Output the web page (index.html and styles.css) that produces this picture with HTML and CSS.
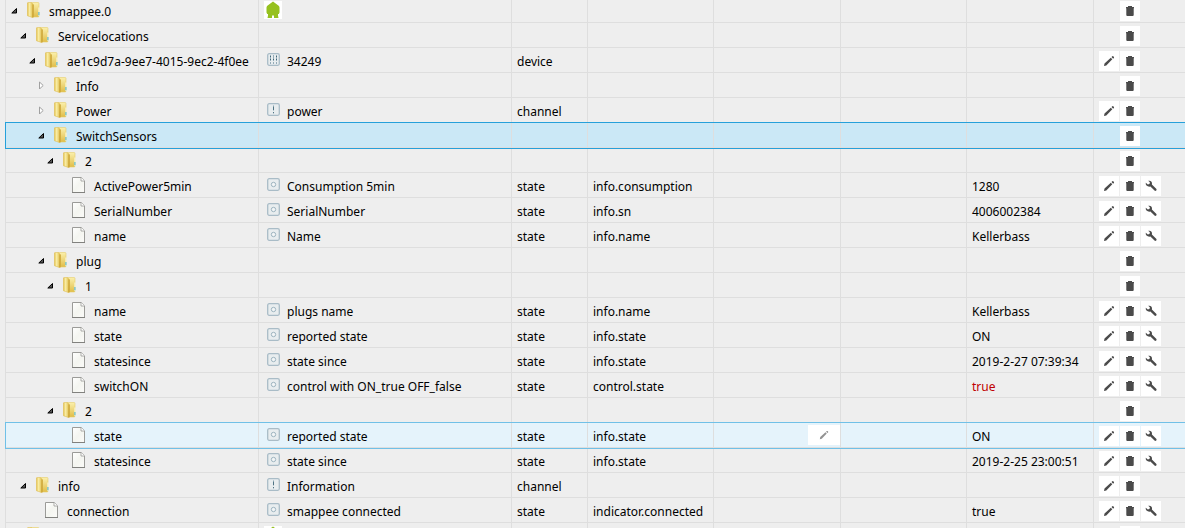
FILE: index.html
```html
<!DOCTYPE html>
<html lang="en">
<head>
<meta charset="utf-8">
<title>Objects</title>
<link rel="stylesheet" href="styles.css">
<script src="objects.js" defer></script>
</head>
<body>
<svg class="sprite" aria-hidden="true">
  <defs>
    <linearGradient id="gold" x1="0" y1="0" x2="1" y2="0">
      <stop offset="0" stop-color="#e3c04a"/><stop offset=".4" stop-color="#f9eda6"/><stop offset="1" stop-color="#dfbd48"/>
    </linearGradient>
    <linearGradient id="gold-back" x1="0" y1="0" x2="0" y2="1">
      <stop offset="0" stop-color="#fbf0ac"/><stop offset="1" stop-color="#e0bd48"/>
    </linearGradient>
    <linearGradient id="paper" x1="0" y1="0" x2="1" y2="1">
      <stop offset="0" stop-color="#ffffff"/><stop offset=".5" stop-color="#f4f5f0"/><stop offset="1" stop-color="#fbfbf9"/>
    </linearGradient>
  </defs>
  <symbol id="open" viewBox="0 0 8 8"><path d="M5.500 2.500v4.500H.8z" fill="#555" stroke="#000"/></symbol>
  <symbol id="closed" viewBox="0 0 8 8"><path d="M1.500 1v7l3.700-3.500z" fill="#fff" stroke="#a0a0a0"/></symbol>
  <symbol id="folder" viewBox="0 0 13 16">
    <path d="M4 .5h7q1 0 1 1v12.500q0 1-1 1H4z" fill="url(#gold-back)" stroke="#e6cc6c" stroke-width=".6"/>
    <path d="M.3 1.500Q.3.500 1.300.5H4L6 2v13.500L1 14q-.7 0-.7-1z" fill="url(#gold)" stroke="#dfc05a" stroke-width=".6"/>
    <path d="M5.500 2.500h1.300v12.800H5z" fill="#cfa93c"/>
    <path d="M11.300 5.500h1.500v8.500h-1.500z" fill="#f8f2d0"/><path d="M11.300 10h1.200v3.200h-1.200z" fill="#62b9cc"/>
  </symbol>
  <symbol id="file" viewBox="0 0 13 16">
    <path d="M.5.500h8.700l3.300 3.300v11.700H.5z" fill="url(#paper)" stroke="#9b9b98"/>
    <path d="M9 .5V4h3.500" fill="#fff" stroke="#9b9b98" stroke-width=".8"/>
    <path d="M0 15.500h13" stroke="#81817e"/>
  </symbol>
  <symbol id="state" viewBox="0 0 13 13"><rect x=".7" y=".7" width="11.600" height="11.600" rx="1.500" fill="#e8edef" stroke="#a9bcc7" stroke-width="1.300"/><circle cx="6.500" cy="6.500" r="2.200" fill="#f2f5f6" stroke="#9db4c0"/></symbol>
  <symbol id="channel" viewBox="0 0 13 13"><rect x=".7" y=".7" width="11.600" height="11.600" rx="1.500" fill="#e8edef" stroke="#a9bcc7" stroke-width="1.300"/><path d="M6.500 2.500v5M6.500 9v1.500" stroke="#839fac"/><path d="M6 4h1v3H6zM6 9h1v1H6z" fill="#4f7383"/></symbol>
  <symbol id="device" viewBox="0 0 13 13"><rect x=".7" y=".7" width="11.600" height="11.600" rx="1.500" fill="#e8edef" stroke="#a9bcc7" stroke-width="1.300"/><path d="M3.500 2v6M6.500 2v6M9.500 2v6M3.500 9v2M6.500 9v2M9.500 9v2" stroke="#94abb7"/><path d="M3 3h1v1H3zM9 3h1v1H9zM6 6h1v1H6zM3 6h1v1H3zM9 6h1v1H9z" fill="#426777"/></symbol>
  <symbol id="home" viewBox="0 0 18 18"><path d="M9 .5l6 4.500.5 1.500v5l-.7 1.500H14v1.500l.5 2.500H10v-2.500H8V17H3.500l.5-2.500V13h-.8l-.7-1.500v-5L3 5z" fill="#96c11f"/></symbol>
  <symbol id="edit" viewBox="0 0 12 12"><path d="M1 11l.5-2.500L7.800 2.800l1.500 1.500L3.300 10.400zM8.500 2.100l.8-.8q.5-.4 1 0l.6.6q.4.5 0 1l-.8.800z" fill="#4b4b4b"/></symbol>
  <symbol id="trash" viewBox="0 0 12 12"><path d="M2 2h2V1h4v1h2v1.200h-.3V10q0 1-1 1H3.300q-1 0-1-1V3.200H2z" fill="#4b4b4b"/></symbol>
  <symbol id="wrench" viewBox="0 0 12 12"><path d="M3.200.8Q5.300.200 6.500 1.800 7.300 3 6.900 4.600l4.300 4.100q.8.900.1 1.700-.9.900-1.800.1L5.400 6.500Q3.100 7 1.500 5.500.400 4.200.8 2.800L2.800 4.400 4.500 3.900 4.900 2.300z" fill="#4b4b4b"/></symbol>
</svg>
<main class="tree">
  <table class="objects" aria-label="Objects">
    <colgroup>
      <col class="col-name"><col class="col-name"><col class="col-type"><col class="col-role"><col class="col-info"><col class="col-role"><col class="col-info"><col class="col-actions">
    </colgroup>
    <tbody id="rows"></tbody>
  </table>
</main>
</body>
</html>
```
FILE: styles.css
```css
* { box-sizing: border-box; }

body {
  margin: 0;
  height: 100vh;
  overflow: hidden;
  background: #eee;
  color: #000;
  font: 12px/20px "Noto Sans", "Open Sans", sans-serif;
}

.sprite { position: absolute; width: 0; height: 0; }

.tree {
  margin: -2px 0 0 5px;
  border-left: 1px solid #dedede;
}

.objects {
  width: 100%;
  table-layout: fixed;
  border-collapse: separate;
  border-spacing: 0;
}

.col-name { width: 253px; }
.col-type { width: 76px; }
.col-role { width: 126px; }
.col-info { width: 127px; }
.col-actions { width: 91px; }

.objects td {
  height: 25px;
  padding: 0 0 0 5px;
  overflow: hidden;
  white-space: nowrap;
  border-right: 1px solid #dedede;
  border-bottom: 1px solid #dedede;
}

.objects td:last-child { border-right: 0; }

.cell {
  display: flex;
  align-items: center;
  height: 24px;
}

.text { padding-top: 4px; }

.twisty { flex: none; width: 8px; height: 8px; margin-right: 8px; }
.kind { flex: none; width: 13px; height: 16px; margin-right: 9px; }
.role { flex: none; width: 13px; height: 13px; margin: 0 7px 1px 3px; }
.logo { flex: none; width: 18px; height: 18px; background: #fff; }

.level-1 { padding-left: 9px; }
.level-2 { padding-left: 18px; }
.level-3 { padding-left: 27px; }
.level-4 { padding-left: 36px; }
.level-5 { padding-left: 45px; }

.selected { background: #cbe8f6; outline: 1px solid #26a0da; }
.hovered { background: #e5f3fb; outline: 1px solid #70c0e7; }
.selected, .hovered { position: relative; }

.actions {
  display: grid;
  grid-template-columns: repeat(3, 20px);
  gap: 1px;
  padding-top: 2px;
}

.button {
  display: flex;
  align-items: center;
  justify-content: center;
  height: 20px;
  padding: 0;
  border: 0;
  background: #fff;
}

.button svg { width: 12px; height: 12px; }
.edit { grid-column: 1; }
.trash { grid-column: 2; }
.wrench { grid-column: 3; }

.inline-edit { width: 32px; margin-left: auto; }
.inline-edit svg { width: 10px; height: 10px; opacity: .6; }

.alert { color: #c00000; }
```
FILE: objects.js
```js
// level, node kind, name, icon, description, type, role, value, actions, row state
const objects = [
  [0, "open", "smappee.0", "home", "", "", "", "", "t"],
  [1, "open", "Servicelocations", "", "", "", "", "", "t"],
  [2, "open", "ae1c9d7a-9ee7-4015-9ec2-4f0ee", "device", "34249", "device", "", "", "et"],
  [3, "closed", "Info", "", "", "", "", "", "t"],
  [3, "closed", "Power", "channel", "power", "channel", "", "", "et"],
  [3, "open", "SwitchSensors", "", "", "", "", "", "t", "selected"],
  [4, "open", "2", "", "", "", "", "", "t"],
  [5, "file", "ActivePower5min", "state", "Consumption 5min", "state", "info.consumption", "1280", "etw"],
  [5, "file", "SerialNumber", "state", "SerialNumber", "state", "info.sn", "4006002384", "etw"],
  [5, "file", "name", "state", "Name", "state", "info.name", "Kellerbass", "etw"],
  [3, "open", "plug", "", "", "", "", "", "t"],
  [4, "open", "1", "", "", "", "", "", "t"],
  [5, "file", "name", "state", "plugs name", "state", "info.name", "Kellerbass", "etw"],
  [5, "file", "state", "state", "reported state", "state", "info.state", "ON", "etw"],
  [5, "file", "statesince", "state", "state since", "state", "info.state", "2019-2-27 07:39:34", "etw"],
  [5, "file", "switchON", "state", "control with ON_true OFF_false", "state", "control.state", "true", "etw", "changed"],
  [4, "open", "2", "", "", "", "", "", "t"],
  [5, "file", "state", "state", "reported state", "state", "info.state", "ON", "etw", "hovered"],
  [5, "file", "statesince", "state", "state since", "state", "info.state", "2019-2-25 23:00:51", "etw"],
  [1, "open", "info", "channel", "Information", "channel", "", "", "et"],
  [2, "file", "connection", "state", "smappee connected", "state", "indicator.connected", "true", "etw"],
  [0, "open", "", "home", "", "", "", "", "t"]
];

const icon = (id, cls = "") => `<svg class="${cls}" aria-hidden="true">${id ? `<use href="#${id}"/>` : ""}</svg>`;
const button = (id, label, cls = id) =>
  `<button type="button" class="button ${cls}" aria-label="${label}">${icon(id)}</button>`;
const text = (value, cls = "") => `<div class="cell"><span class="text ${cls}">${value}</span></div>`;

document.getElementById("rows").innerHTML = objects.map(
  ([level, kind, name, mark, description, type, role, value, actions, state = ""]) => `
  <tr class="${state}">
    <td><div class="cell level-${level}">
      ${icon(kind === "file" ? "" : kind, "twisty")}${icon(kind === "file" ? "file" : "folder", "kind")}<span class="text">${name}</span>
    </div></td>
    <td><div class="cell">${mark ? icon(mark, mark === "home" ? "logo" : "role") : ""}<span class="text">${description}</span></div></td>
    <td>${text(type)}</td>
    <td>${text(role)}</td>
    <td>${state === "hovered" ? `<div class="cell">${button("edit", "Edit room", "inline-edit")}</div>` : ""}</td>
    <td></td>
    <td>${text(value, state === "changed" ? "alert" : "")}</td>
    <td><div class="cell actions">
      ${actions.includes("e") ? button("edit", "Edit") : ""}
      ${actions.includes("t") ? button("trash", "Delete") : ""}
      ${actions.includes("w") ? button("wrench", "Settings") : ""}
    </div></td>
  </tr>`).join("");
```
